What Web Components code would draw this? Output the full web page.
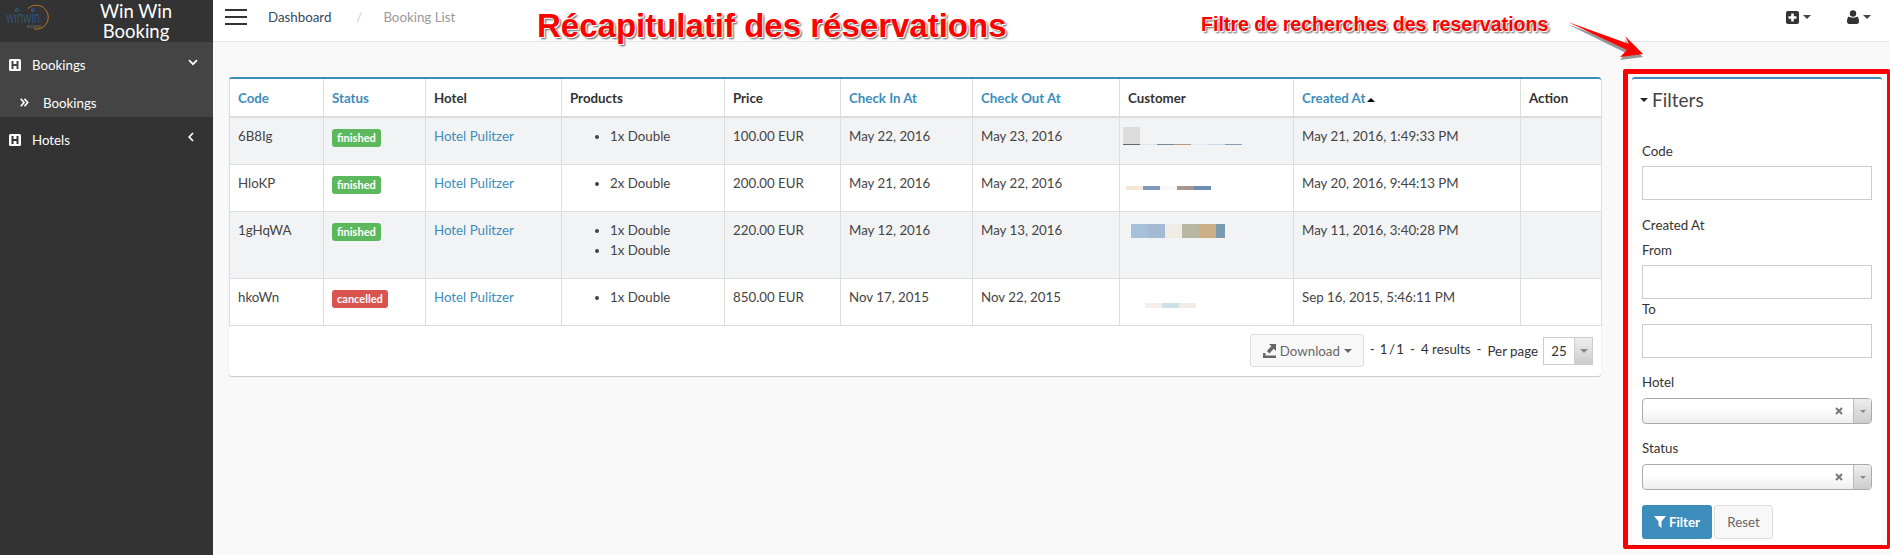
<!DOCTYPE html>
<html>
<head>
<meta charset="utf-8">
<title>Win Win Booking</title>
<style>
    html, body { margin: 0; height: 100%; }
    body {
        background: #f9f9f9;
        font-family: "Lato", "Liberation Sans", sans-serif;
        font-size: 13.3px;
        color: #333;
        overflow: hidden;
    }
</style>
</head>
<body>
<app-shell>
    <side-nav slot="side"></side-nav>
    <top-bar slot="top"></top-bar>
    <booking-table slot="main"></booking-table>
    <filter-panel slot="filters"></filter-panel>
    <note-layer slot="notes"></note-layer>
</app-shell>

<script>
// petits helpers pour les icones
const caret = (color, size = 4) => `<span style="display:inline-block;width:0;height:0;border-left:${size}px solid transparent;border-right:${size}px solid transparent;border-top:${size}px solid ${color};vertical-align:middle"></span>`;
const hIcon = `<svg width="14" height="14" viewBox="0 0 14 14"><path fill="#fff" fill-rule="evenodd" d="M2.500 1h9A1.500 1.500 0 0 1 13 2.500v9a1.500 1.500 0 0 1-1.500 1.500h-9A1.500 1.500 0 0 1 1 11.500v-9A1.500 1.500 0 0 1 2.500 1zM3.500 3v8h2V8h3v3h2V3h-2v3h-3V3z"/></svg>`;

class AppShell extends HTMLElement {
    constructor () {
        super ();
        this.attachShadow ({mode: 'open'}).innerHTML = `
<style>
    :host { display: flex; width: 1890px; height: 555px; position: relative; overflow: hidden; }
    .side { flex: 0 0 213px; background: #333; }
    .right { flex: 1; display: flex; flex-direction: column; min-width: 0; }
    .body { display: flex; align-items: flex-start; flex: 1; }
    .main { width: 1372px; margin: 35px 0 0 16px; }
    .filters { margin: 27px 0 0 22px; flex: 1; }
</style>
<div class="side"><slot name="side"></slot></div>
<div class="right">
    <slot name="top"></slot>
    <div class="body">
        <div class="main"><slot name="main"></slot></div>
        <div class="filters"><slot name="filters"></slot></div>
    </div>
</div>
<slot name="notes"></slot>`;
    }
}

class SideNav extends HTMLElement {
    constructor () {
        super ();
        this.attachShadow ({mode: 'open'}).innerHTML = `
<style>
    :host { display: block; color: #fff; font-size: 13.3px; }
    .brand { height: 42px; display: flex; }
    .brand svg { margin: 4px 0 0 5px; flex: none; }
    .brand b { font-weight: 400; font-size: 18.500px; line-height: 20px; margin: 0 0 0 40px; padding-top: 1px; width: 90px; height: 41px; text-align: center; }
    .open { background: #444; height: 75px; }
    .row { display: flex; align-items: center; height: 46px; padding-left: 8px; gap: 10px; position: relative; }
    .open .sub { height: 29px; padding-left: 20px; gap: 14px; }
    .chev { position: absolute; left: 188px; top: 14px; }
</style>
<div class="brand">
    <svg width="46" height="28" viewBox="0 0 46 28" fill="none">
        <path d="M23 4.500A12 12 0 1 1 29 25" stroke="#b5762a" stroke-width="1"/>
        <text transform="translate(1 19) scale(.65 1)" font-family="Lato, sans-serif" font-size="17" font-weight="300" fill="#2f6ba5">winwin</text>
        <circle cx="12" cy="6" r="1.500" stroke="#2f6ba5" stroke-width=".7"/>
        <circle cx="28" cy="6" r="1.500" stroke="#2f6ba5" stroke-width=".7"/>
        <text x="22" y="24" font-family="Lato, sans-serif" font-size="3" fill="#8a7a60">BOOKING</text>
    </svg>
    <b>Win Win Booking</b>
</div>
<div class="open">
    <div class="row">${hIcon}<span>Bookings</span>
        <svg class="chev" width="10" height="7" viewBox="0 0 10 7" style="top:17px"><path d="M1 1.200l4 4 4-4" fill="none" stroke="#fff" stroke-width="1.700"/></svg>
    </div>
    <div class="row sub">
        <svg width="9" height="9" viewBox="0 0 9 9"><path d="M.8.800L4 4.500.8 8.200M4.500.800l3.200 3.700-3.200 3.700" fill="none" stroke="#fff" stroke-width="1.700"/></svg>
        <span>Bookings</span>
    </div>
</div>
<div class="row">${hIcon}<span>Hotels</span>
    <svg class="chev" width="6" height="10" viewBox="0 0 6 10" style="top:15px"><path d="M5 1L1.200 5 5 9" fill="none" stroke="#fff" stroke-width="1.700"/></svg>
</div>`;
    }
}

class TopBar extends HTMLElement {
    constructor () {
        super ();
        this.attachShadow ({mode: 'open'}).innerHTML = `
<style>
    :host { display: flex; align-items: center; height: 41px; background: #fff; border-bottom: 1px solid #e7e7e7; box-sizing: content-box; padding-left: 12px; }
    .burger { width: 22px; height: 16px; display: flex; flex-direction: column; justify-content: space-between; margin-top: -7px; }
    .burger i { display: block; height: 2px; background: #333; }
    .crumbs { display: flex; margin: -7px 0 0 21px; font-size: 13.3px; }
    .crumbs a { color: #34495e; }
    .crumbs i { font-style: normal; color: #ccc; margin: 0 21px 0 25px; }
    .crumbs span { color: #999; }
    .tools { margin: -7px 0 0 auto; display: flex; align-items: center; padding-right: 19px; }
    .tools div { display: flex; align-items: center; gap: 4px; }
    .tools div + div { margin-left: 36px; }
</style>
<div class="burger"><i></i><i></i><i></i></div>
<div class="crumbs"><a>Dashboard</a><i>/</i><span>Booking List</span></div>
<div class="tools">
    <div><svg width="13" height="13" viewBox="0 0 13 13"><path fill="#333" fill-rule="evenodd" d="M2 0h9a2 2 0 0 1 2 2v9a2 2 0 0 1-2 2H2a2 2 0 0 1-2-2V2a2 2 0 0 1 2-2zM5.200 2.500v2.700H2.500v2.600h2.700v2.700h2.600V7.800h2.700V5.200H7.800V2.500z"/></svg>${caret("#444")}</div>
    <div><svg width="12" height="14" viewBox="0 0 12 14"><circle cx="6" cy="3.500" r="3.200" fill="#333"/><path fill="#333" d="M1.500 6.500C3 8 9 8 10.500 6.500 11.500 7.500 12 9.500 12 11.500 12 13 11 14 10 14H2C1 14 0 13 0 11.500 0 9.500.5 7.500 1.500 6.500z"/></svg>${caret("#444")}</div>
</div>`;
    }
}

class StatusBadge extends HTMLElement {
    constructor () {
        super ();
        this.attachShadow ({mode: 'open'}).innerHTML = `
<style>
    :host { display: inline-flex; align-items: center; height: 18px; padding: 0 5px; border-radius: 3px; font-size: 11px; font-weight: 700; color: #fff; background: #5cb85c; vertical-align: top; margin-top: 2px; }
    :host([kind="cancelled"]) { background: #d9534f; }
</style>
<slot></slot>`;
    }
}

class BlurStrip extends HTMLElement {
    constructor () {
        super ();
        this.attachShadow ({mode: 'open'});
    }
    connectedCallback () {
        let colors = (this.getAttribute ("colors") || "").split (",");
        let html = `<style>:host { display: flex; } i { display: block; flex: 0 0 17px; height: 100%; }</style>`;
        colors.forEach (c => { html += `<i style="background:${c}"></i>`; });
        this.shadowRoot.innerHTML = html;
    }
}

class BookingTable extends HTMLElement {
    constructor () {
        super ();
        this.attachShadow ({mode: 'open'});
    }
    connectedCallback () {
        const rows = [
            ["6B8Ig", "finished", ["1x Double"], "100.00 EUR", "May 22, 2016", "May 23, 2016", "May 21, 2016, 1:49:33 PM",
                `<div style="margin:9px 0 0 -6px"><blur-strip style="height:17px" colors="#dcdcdc"></blur-strip><blur-strip style="height:1px" colors="#666,#dce6ef,#7c8796,#b59a85,#e6eaf0,#c8d8e8,#8c9bb5"></blur-strip></div>`],
            ["HloKP", "finished", ["2x Double"], "200.00 EUR", "May 21, 2016", "May 22, 2016", "May 20, 2016, 9:44:13 PM",
                `<blur-strip style="height:4px;margin:21px 0 0 -3px" colors="#f3e8d8,#8099bb,#f8f8f8,#a39590,#6e8db5"></blur-strip>`],
            ["1gHqWA", "finished", ["1x Double", "1x Double"], "220.00 EUR", "May 12, 2016", "May 13, 2016", "May 11, 2016, 3:40:28 PM",
                `<blur-strip style="height:14px;margin:12px 0 0 1.500px;width:94px;overflow:hidden" colors="#a5c0da,#a4bad4,#efece6,#b8b8a2,#ccaf87,#7a9ab0"></blur-strip>`],
            ["hkoWn", "cancelled", ["1x Double"], "850.00 EUR", "Nov 17, 2015", "Nov 22, 2015", "Sep 16, 2015, 5:46:11 PM",
                `<blur-strip style="height:5px;margin:24px 0 0 15.500px" colors="#f5eee9,#cde0e8,#f3ebe6"></blur-strip>`]
        ];
        let body = "";
        rows.forEach (r => {
            body += `<tr>
                <td>${r[0]}</td>
                <td><status-badge kind="${r[1]}">${r[1]}</status-badge></td>
                <td><a>Hotel Pulitzer</a></td>
                <td><ul>${r[2].map (p => `<li>${p}</li>`).join ("")}</ul></td>
                <td>${r[3]}</td><td>${r[4]}</td><td>${r[5]}</td>
                <td class="cust">${r[7]}</td>
                <td>${r[6]}</td><td></td>
            </tr>`;
        });
        this.shadowRoot.innerHTML = `
<style>
    :host { display: block; background: #fff; border-top: 2px solid #3c8dbc; border-radius: 3px; box-shadow: 0 1px 1px rgba(0,0,0,.2); height: 297px; }
    table { border-collapse: collapse; table-layout: fixed; width: 1372px; font-size: 13.3px; }
    th, td { border: 1px solid #ddd; padding: 9px 8px 0 8px; text-align: left; vertical-align: top; line-height: 18px; box-sizing: border-box; }
    thead th { border-top: 0; height: 38px; padding-top: 10px; border-bottom: 2px solid #ddd; font-weight: 700; color: #333; }
    th.s { color: #3c8dbc; }
    td { height: 47px; color: #444; }
    tbody tr:nth-child(odd) td { background: #f2f3f5; }
    tbody tr:nth-child(3) td { height: 67px; }
    a { color: #3c8dbc; }
    ul { margin: -1px 0 0; padding: 0 0 0 40px; }
    li { line-height: 20px; }
    td.cust { padding: 0 0 0 9px; }
    .up { display: inline-block; width: 0; height: 0; border: 4px solid transparent; border-bottom-color: #000; border-top: 0; margin-left: 2px; vertical-align: middle; }
    .foot { display: flex; align-items: center; justify-content: flex-end; height: 50px; padding: 0 8px 0 0; }
    .dl { display: flex; align-items: center; gap: 4px; height: 33px; width: 114px; box-sizing: border-box; padding-left: 12px; background: #f8f8f8; border: 1px solid #ddd; border-radius: 3px; color: #666; margin-right: 6px; }
    .foot span.t { margin: -4px 6px 0 0; }
    .foot span.first { margin-right: 5px; }
    .foot span.page { word-spacing: -2px; }
    .foot span.pp { margin: 0 5px 0 0; }
    .sel { display: flex; width: 50px; height: 28px; box-sizing: border-box; border: 1px solid #ccc; }
    .sel b { flex: 1; font-weight: 400; text-align: center; line-height: 26px; }
    .sel i { width: 17px; background: linear-gradient(#eee, #ccc); display: flex; align-items: center; justify-content: center; border-left: 1px solid #ccc; }
</style>
<table>
    <colgroup>
        <col style="width:94px"><col style="width:102px"><col style="width:136px"><col style="width:163px"><col style="width:116px">
        <col style="width:132px"><col style="width:147px"><col style="width:174px"><col style="width:227px"><col style="width:81px">
    </colgroup>
    <thead><tr>
        <th class="s">Code</th><th class="s">Status</th><th>Hotel</th><th>Products</th><th>Price</th>
        <th class="s">Check In At</th><th class="s">Check Out At</th><th>Customer</th>
        <th class="s">Created At<span class="up"></span></th><th>Action</th>
    </tr></thead>
    <tbody>${body}</tbody>
</table>
<div class="foot">
    <div class="dl">
        <svg width="13" height="14" viewBox="0 0 13 14"><path fill="#666" d="M0 11.500h13V14H0zM0 9h2.500v2.500H0zM6 0h7v7l-2.300-2.300-4.400 4.700-2.400-2.400 4.400-4.700z"/></svg>
        Download ${caret("#666")}
    </div>
    <span class="t first">-</span><span class="t page">1 / 1</span><span class="t">-</span><span class="t">4 results</span><span class="t">-</span><span class="pp">Per page</span>
    <div class="sel"><b>25</b><i>${caret("#888")}</i></div>
</div>`;
    }
}

class FilterField extends HTMLElement {
    constructor () {
        super ();
        this.attachShadow ({mode: 'open'});
    }
    connectedCallback () {
        const combo = this.hasAttribute ("combo");
        this.shadowRoot.innerHTML = `
<style>
    :host { display: block; font-size: 13.3px; }
    label { display: block; line-height: 18px; margin-top: -1px; }
    .input { height: 34px; border: 1px solid #ccc; box-sizing: border-box; background: #fff; margin-top: 6px; }
    .combo { height: 26px; margin-top: 7px; border: 1px solid #aaa; border-radius: 4px; box-sizing: border-box; background: linear-gradient(#fff 40%, #eee); display: flex; justify-content: flex-end; align-items: center; }
    .combo svg { margin-right: 10px; }
    .combo i { width: 18px; height: 100%; border-left: 1px solid #bbb; box-sizing: border-box; background: linear-gradient(#eee, #ccc); display: flex; align-items: center; justify-content: center; border-radius: 0 3px 3px 0; }
</style>
<label>${this.getAttribute ("label")}</label>
${combo ? `<div class="combo"><svg width="8" height="8" viewBox="0 0 8 8"><path d="M1 1l6 6M7 1L1 7" stroke="#777" stroke-width="2"/></svg><i>${caret("#888", 3)}</i></div>` : `<div class="input"></div>`}`;
    }
}

class FilterPanel extends HTMLElement {
    constructor () {
        super ();
        this.attachShadow ({mode: 'open'}).innerHTML = `
<style>
    :host { display: block; border: solid #f00; border-width: 5px 3px 4px 5px; border-radius: 2px; height: 480px; box-sizing: border-box; padding: 3px 5px 0 4px; }
    .box { background: #fff; border-top: 2px solid #3c8dbc; border-radius: 3px; height: 468px; padding: 0 10px; box-sizing: border-box; box-shadow: 0 1px 1px rgba(0,0,0,.15); }
    h3 { margin: 0 0 0 -2px; font-weight: 400; font-size: 19px; color: #444; line-height: 24px; padding-top: 9px; display: flex; align-items: center; gap: 4px; }
    .code { margin-top: 31px; }
    .plain { line-height: 18px; margin: 16px 0 0; }
    .from { margin-top: 8px; }
    .to { margin-top: 2px; }
    .hotel { margin-top: 16px; }
    .status { margin-top: 16px; }
    .btns { display: flex; gap: 2px; margin-top: 15px; }
    .btns div { height: 34px; display: flex; align-items: center; justify-content: center; gap: 3px; box-sizing: border-box; border-radius: 3px; }
    .go { width: 70px; background: #3c8dbc; color: #fff; font-weight: 700; }
    .rs { width: 59px; background: #f8f8f8; border: 1px solid #ddd; color: #666; }
</style>
<div class="box">
    <h3>${caret("#222")}<span>Filters</span></h3>
    <filter-field class="code" label="Code"></filter-field>
    <div class="plain">Created At</div>
    <filter-field class="from" label="From"></filter-field>
    <filter-field class="to" label="To"></filter-field>
    <filter-field class="hotel" label="Hotel" combo></filter-field>
    <filter-field class="status" label="Status" combo></filter-field>
    <div class="btns">
        <div class="go"><svg width="12" height="12" viewBox="0 0 12 12"><path fill="#fff" d="M0 0h12L7.500 5.500V12L4.500 9.500v-4z"/></svg>Filter</div>
        <div class="rs">Reset</div>
    </div>
</div>`;
    }
}

// les annotations rouges posees par dessus la capture
class NoteLayer extends HTMLElement {
    constructor () {
        super ();
        this.attachShadow ({mode: 'open'}).innerHTML = `
<style>
    :host { position: absolute; inset: 0; pointer-events: none; font-family: "Liberation Sans", Arial, sans-serif; color: #f00; font-weight: 700; }
    div { position: absolute; white-space: nowrap; text-shadow: 0 0 2px #fff, 1px 1px 0 #fff, 2px 2px 2px #555; }
    .big { left: 537px; top: 6px; font-size: 33px; line-height: 40px; }
    .small { left: 1201px; top: 13px; font-size: 19.600px; line-height: 22px; }
    svg { position: absolute; left: 1562px; top: 16px; }
</style>
<div class="big">Récapitulatif des réservations</div>
<div class="small">Filtre de recherches des reservations</div>
<svg width="90" height="50" viewBox="0 0 90 50">
    <path d="M6 7L67 29 63 22 82 40 59 43 65 36z" fill="#555" opacity=".6" transform="translate(-1 1)"/>
    <path d="M6 6L67 28 63 20 81 38 58 41 65 34z" fill="#f00"/>
</svg>`;
    }
}

customElements.define ("app-shell", AppShell);
customElements.define ("side-nav", SideNav);
customElements.define ("top-bar", TopBar);
customElements.define ("status-badge", StatusBadge);
customElements.define ("blur-strip", BlurStrip);
customElements.define ("booking-table", BookingTable);
customElements.define ("filter-field", FilterField);
customElements.define ("filter-panel", FilterPanel);
customElements.define ("note-layer", NoteLayer);
</script>
</body>
</html>
